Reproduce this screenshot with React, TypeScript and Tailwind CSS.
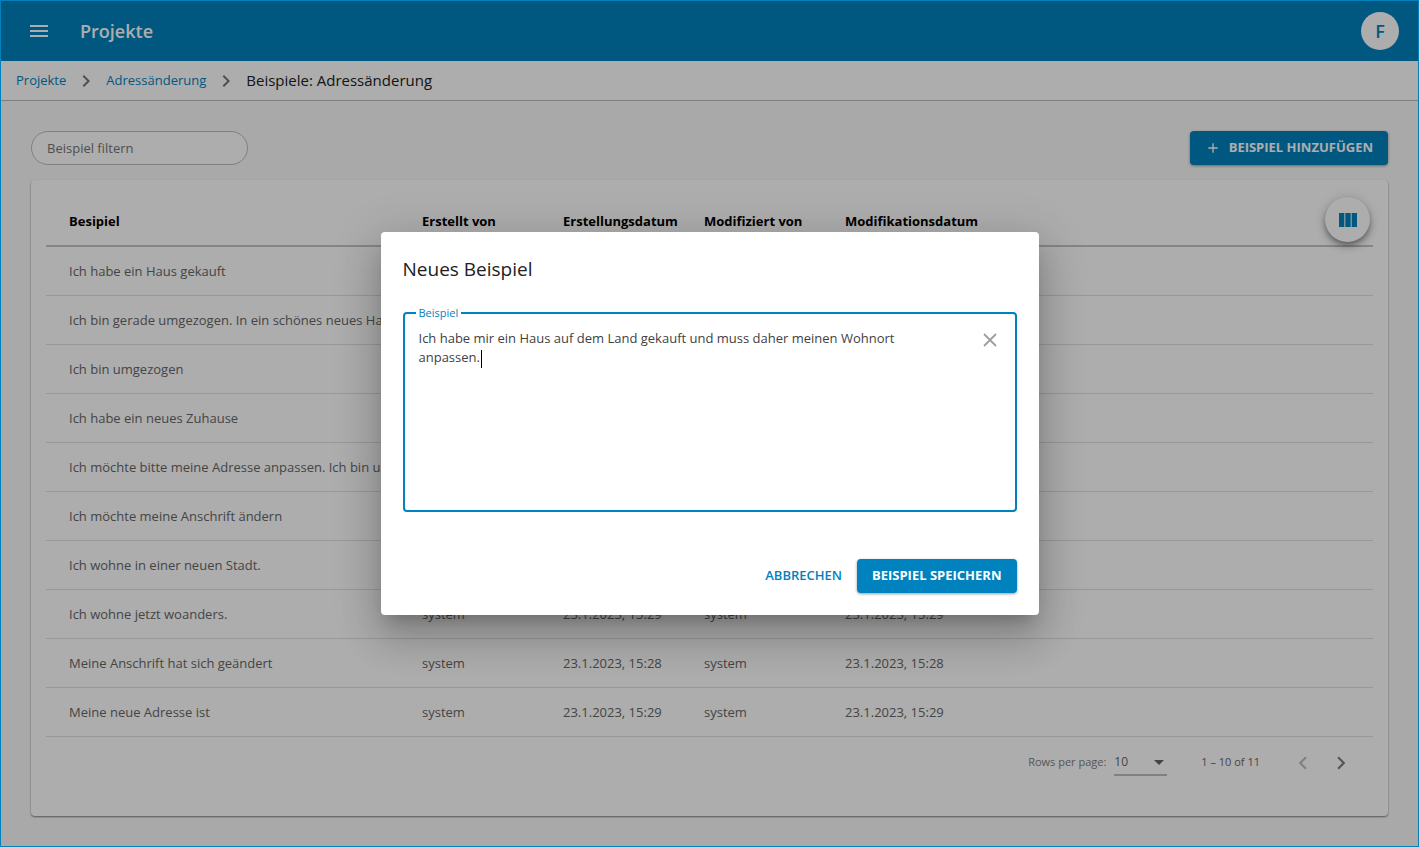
import { useState } from "react";
import { MdAdd, MdArrowDropDown, MdChevronLeft, MdChevronRight, MdMenu, MdViewColumn } from "react-icons/md";

type Example = { text: string; user: string; date: string };

const examples: Example[] = [
  { text: "Ich habe ein Haus gekauft", user: "system", date: "23.1.2023, 15:28" },
  { text: "Ich bin gerade umgezogen. In ein schönes neues Haus", user: "system", date: "23.1.2023, 15:28" },
  { text: "Ich bin umgezogen", user: "system", date: "23.1.2023, 15:28" },
  { text: "Ich habe ein neues Zuhause", user: "system", date: "23.1.2023, 15:28" },
  { text: "Ich möchte bitte meine Adresse anpassen. Ich bin umgezogen", user: "system", date: "23.1.2023, 15:28" },
  { text: "Ich möchte meine Anschrift ändern", user: "system", date: "23.1.2023, 15:28" },
  { text: "Ich wohne in einer neuen Stadt.", user: "system", date: "23.1.2023, 15:28" },
  { text: "Ich wohne jetzt woanders.", user: "system", date: "23.1.2023, 15:29" },
  { text: "Meine Anschrift hat sich geändert", user: "system", date: "23.1.2023, 15:28" },
  { text: "Meine neue Adresse ist", user: "system", date: "23.1.2023, 15:29" },
];

function Header() {
  return (
    <header className="flex h-15 items-center bg-[#0082be] pr-[19px] pl-[26px] text-white">
      <button type="button" aria-label="Menü" className="mr-[29px]">
        <MdMenu className="size-6" />
      </button>
      <h1 className="flex-1 text-lg font-semibold">Projekte</h1>
      <button type="button" className="size-[38px] rounded-full bg-white text-lg font-semibold text-[#0082be]">
        F
      </button>
    </header>
  );
}

function Breadcrumbs() {
  return (
    <nav className="flex h-10 items-center gap-2 border-b border-[#bdbdbd] bg-white px-[15px]">
      <a href="#projekte" className="text-[#0082be]">Projekte</a>
      <MdChevronRight className="size-6 text-[#757575]" />
      <a href="#adressaenderung" className="text-[#0082be]">Adressänderung</a>
      <MdChevronRight className="size-6 text-[#757575]" />
      <span className="text-[15px]">Beispiele: Adressänderung</span>
    </nav>
  );
}

function ExampleTable() {
  return (
    <table className="w-full table-fixed text-left">
      <colgroup>
        <col className="w-[376px]" />
        <col className="w-[141px]" />
        <col className="w-[141px]" />
        <col className="w-[141px]" />
        <col />
      </colgroup>
      <thead>
        <tr className="h-[51px] border-b-2 border-[#c4c4c4] text-black *:pt-[3px]">
          <th className="pl-[23px]">Besipiel</th>
          <th>Erstellt von</th>
          <th>Erstellungsdatum</th>
          <th>Modifiziert von</th>
          <th>Modifikationsdatum</th>
        </tr>
      </thead>
      <tbody className="text-[#666666]">
        {examples.map((e) => (
          <tr key={e.text} className="h-[49px] border-b border-[#e0e0e0] *:pt-0.5">
            <td className="truncate pr-4 pl-[23px]">{e.text}</td>
            <td>{e.user}</td>
            <td>{e.date}</td>
            <td>{e.user}</td>
            <td>{e.date}</td>
          </tr>
        ))}
      </tbody>
    </table>
  );
}

function Pagination() {
  return (
    <div className="flex h-[52px] items-center justify-end pr-[19px] text-[11px] text-[#666666]">
      <label htmlFor="rows" className="mr-2 text-[#808080]">Rows per page:</label>
      <div className="relative mr-[34px] border-b-2 border-[#bdbdbd]">
        <select id="rows" defaultValue="10" className="h-6 w-[53px] appearance-none text-xs">
          <option>10</option>
        </select>
        <MdArrowDropDown className="pointer-events-none absolute top-0 -right-1 size-6" />
      </div>
      <span className="mr-[30px]">1 – 10 of 11</span>
      <button type="button" disabled aria-label="Vorherige Seite" className="mr-3 text-[#bdbdbd]">
        <MdChevronLeft className="size-[26px]" />
      </button>
      <button type="button" aria-label="Nächste Seite" className="text-[#808080]">
        <MdChevronRight className="size-[26px]" />
      </button>
    </div>
  );
}

function NewExampleDialog() {
  const [text, setText] = useState(
    "Ich habe mir ein Haus auf dem Land gekauft und muss daher meinen Wohnort anpassen.",
  );
  return (
    <div className="absolute inset-0 flex items-center justify-center bg-black/32">
      <section
        role="dialog"
        aria-labelledby="dialog-title"
        className="w-full max-w-[658px] rounded bg-white p-[22px] text-[#212121] shadow-[0_11px_15px_-7px_rgba(0,0,0,0.2),0_24px_38px_3px_rgba(0,0,0,0.14),0_9px_46px_8px_rgba(0,0,0,0.12)]"
      >
        <h2 id="dialog-title" className="text-[19px] leading-[30px] font-medium">Neues Beispiel</h2>
        <fieldset className="relative mt-5 rounded border-2 border-[#0082be]">
          <legend className="ml-[11px] px-[3px] text-[11px] leading-[18px] text-[#0082be]">
            <label htmlFor="example">Beispiel</label>
          </legend>
          <textarea
            id="example"
            value={text}
            onChange={(e) => setText(e.target.value)}
            className="block h-[188px] w-full resize-none pt-[7px] pr-[72px] pl-3.5 leading-[19px] text-[#424242] outline-none"
          />
          <span aria-hidden="true" className="absolute top-7 left-[76px] h-[18px] w-px bg-black" />
          <button type="button" aria-label="Leeren" className="absolute top-[11px] right-[18px] text-[#9e9e9e]">
            <svg width="14" height="14" viewBox="0 0 14 14" stroke="currentColor" strokeWidth="1.8" aria-hidden="true">
              <path d="M1 1l12 12M13 1L1 13" />
            </svg>
          </button>
        </fieldset>
        <div className="mt-[47px] flex justify-end gap-[15px] font-semibold">
          <button type="button" className="h-[34px] text-[#0082be]">ABBRECHEN</button>
          <button
            type="button"
            className="h-[34px] rounded bg-[#0082be] px-[15px] font-bold text-white shadow-[0_1px_3px_rgba(0,0,0,0.4)]"
          >
            BEISPIEL SPEICHERN
          </button>
        </div>
      </section>
    </div>
  );
}

export default function App() {
  return (
    <div className="relative flex min-h-screen flex-col border border-[#0082be] bg-[#fafafa] font-['Open_Sans',sans-serif] text-[13px] text-[#212121]">
      <Header />
      <Breadcrumbs />
      <main className="flex flex-1 flex-col gap-[15px] p-[30px]">
        <div className="flex items-center justify-between">
          <input
            type="text"
            aria-label="Beispiel filtern"
            placeholder="Beispiel filtern"
            className="h-[34px] w-[217px] rounded-full border border-[#bdbdbd] bg-white px-[15px] placeholder:text-[#757575]"
          />
          <button
            type="button"
            className="flex h-[34px] items-center gap-2 rounded bg-[#0082be] px-[15px] font-bold text-white shadow-[0_1px_3px_rgba(0,0,0,0.4)]"
          >
            <MdAdd className="size-4" />
            BEISPIEL HINZUFÜGEN
          </button>
        </div>
        <div className="relative flex-1 rounded bg-white p-[15px] shadow-[0_1px_2px_rgba(0,0,0,0.5)]">
          <ExampleTable />
          <Pagination />
          <button
            type="button"
            aria-label="Spalten"
            className="absolute top-[17px] right-[18px] flex size-[45px] items-center justify-center rounded-full bg-white text-[#0082be] shadow-[0_3px_5px_-1px_rgba(0,0,0,0.3),0_5px_9px_rgba(0,0,0,0.2),0_1px_12px_rgba(0,0,0,0.15)]"
          >
            <MdViewColumn className="size-6" />
          </button>
        </div>
      </main>
      <NewExampleDialog />
    </div>
  );
}
